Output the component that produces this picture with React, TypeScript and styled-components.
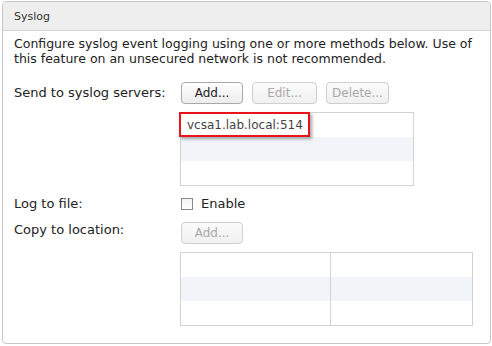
import React from "react";
import styled, { createGlobalStyle } from "styled-components";

const Global = createGlobalStyle`
  html, body { margin: 0; padding: 0; background: #ffffff; }
  body { font-family: "DejaVu Sans", Verdana, sans-serif; color: #333333; }
`;

const Panel = styled.section`
  box-sizing: border-box;
  margin: 1px 0 0 2px;
  width: 489px;
  height: 343px;
  border: 1px solid #c6c6c6;
  border-radius: 4px;
  background: #ffffff;
  overflow: hidden;
`;

const Header = styled.header`
  height: 29px;
  box-sizing: border-box;
  padding: 0 0 0 11px;
  display: flex;
  align-items: center;
  background: #eeeeee;
  border-bottom: 1px solid #d4d4d4;
  font-size: 11px;
  color: #333333;
`;

const Body = styled.div`
  padding: 5px 6px 0 11px;
`;

const Description = styled.p`
  margin: 0;
  font-size: 12.5px;
  line-height: 15px;
  color: #222222;
`;

const FormGrid = styled.div`
  display: grid;
  grid-template-columns: 166px 1fr;
  margin-top: 16px;
`;

const Label = styled.div<{ $top: number }>`
  font-size: 13px;
  line-height: 16px;
  color: #222222;
  padding-top: ${(p) => p.$top}px;
`;

const Field = styled.div<{ $mt: number }>`
  display: flex;
  flex-direction: column;
  align-items: flex-start;
  margin-top: ${(p) => p.$mt}px;
`;

const Toolbar = styled.div`
  display: flex;
  gap: 9px;
  margin-left: 1px;
`;

const Button = styled.button<{ $w: number }>`
  box-sizing: border-box;
  width: ${(p) => p.$w}px;
  height: 22px;
  padding: 0;
  border: 1px solid ${(p) => (p.disabled ? "#cfcfcf" : "#a9a9a9")};
  border-radius: 4px;
  background: ${(p) =>
    p.disabled
      ? "linear-gradient(#fbfbfb, #f0f0f0)"
      : "linear-gradient(#ffffff, #ececec)"};
  color: ${(p) => (p.disabled ? "#a8a8a8" : "#222222")};
  font-family: "DejaVu Sans", Verdana, sans-serif;
  font-size: 12px;
  line-height: 20px;
  cursor: default;
`;

const Grid = styled.div<{ $w: number }>`
  position: relative;
  box-sizing: border-box;
  width: ${(p) => p.$w}px;
  margin-top: 8px;
  border: 1px solid #d2d2d2;
  background: #ffffff;
`;

const Row = styled.div<{ $alt?: boolean; $cols: string }>`
  display: grid;
  grid-template-columns: ${(p) => p.$cols};
  height: 24px;
  background: ${(p) => (p.$alt ? "#f1f4f8" : "#ffffff")};
`;

const Cell = styled.div<{ $divider?: boolean }>`
  border-right: ${(p) => (p.$divider ? "1px solid #d2d2d2" : "none")};
`;

const Highlight = styled.div`
  position: absolute;
  left: -2px;
  top: -1px;
  box-sizing: border-box;
  width: 131px;
  height: 25px;
  border: 2px solid #e8141b;
  box-shadow: 2px 2px 3px rgba(0, 0, 0, 0.35);
  padding-left: 6px;
  display: flex;
  align-items: center;
  font-size: 12px;
  color: #444444;
  background: #ffffff;
`;

const CheckRow = styled.label`
  display: flex;
  align-items: center;
  gap: 8px;
  margin-left: 1px;
  font-size: 13px;
  color: #222222;
`;

const Box = styled.span`
  box-sizing: border-box;
  width: 12px;
  height: 12px;
  border: 1px solid #8a8a8a;
  background: linear-gradient(#f4f4f4, #ffffff);
`;

export default function App() {
  return (
    <>
      <Global />
      <Panel>
        <Header>Syslog</Header>
        <Body>
          <Description>
            Configure syslog event logging using one or more methods below. Use of
            this feature on an unsecured network is not recommended.
          </Description>
          <FormGrid>
            <Label $top={3}>Send to syslog servers:</Label>
            <Field $mt={0}>
              <Toolbar>
                <Button $w={62}>Add...</Button>
                <Button $w={65} disabled>Edit...</Button>
                <Button $w={63} disabled>Delete...</Button>
              </Toolbar>
              <Grid $w={234}>
                <Row $cols="1fr" />
                <Row $cols="1fr" $alt />
                <Row $cols="1fr" />
                <Highlight>vcsa1.lab.local:514</Highlight>
              </Grid>
            </Field>
            <Label $top={10}>Log to file:</Label>
            <Field $mt={10}>
              <CheckRow>
                <Box />
                Enable
              </CheckRow>
            </Field>
            <Label $top={10}>Copy to location:</Label>
            <Field $mt={10}>
              <Toolbar>
                <Button $w={62} disabled>Add...</Button>
              </Toolbar>
              <Grid $w={293}>
                <Row $cols="150px 1fr">
                  <Cell $divider />
                  <Cell />
                </Row>
                <Row $cols="150px 1fr" $alt>
                  <Cell $divider />
                  <Cell />
                </Row>
                <Row $cols="150px 1fr">
                  <Cell $divider />
                  <Cell />
                </Row>
              </Grid>
            </Field>
          </FormGrid>
        </Body>
      </Panel>
    </>
  );
}
